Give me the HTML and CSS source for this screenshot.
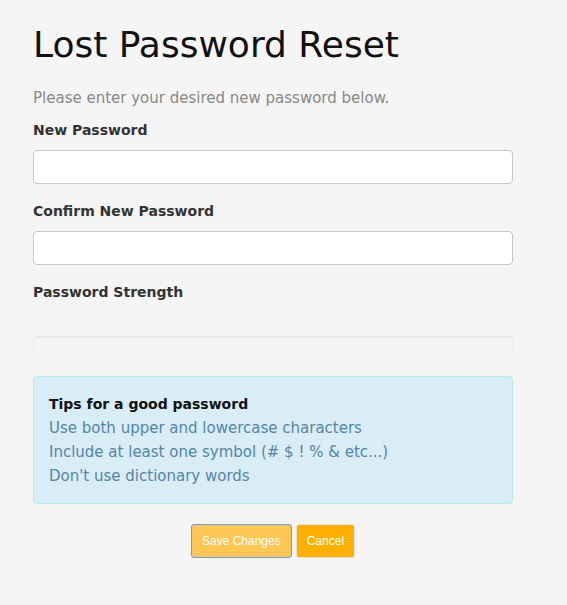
FILE: index.html
```html
<!DOCTYPE html>
<html>
<head>
<meta charset="utf-8">
<link rel="stylesheet" href="styles.css">
</head>
<body>
<div class="page">
  <h1 class="title">Lost Password Reset</h1>
  <p class="intro">Please enter your desired new password below.</p>
  <form class="form">
    <div class="group">
      <label class="label">New Password</label>
      <input class="input" type="password">
    </div>
    <div class="group">
      <label class="label">Confirm New Password</label>
      <input class="input" type="password">
    </div>
    <div class="group">
      <label class="label">Password Strength</label>
      <div class="progress"></div>
    </div>
    <div class="tips">
      <div class="tips-title">Tips for a good password</div>
      <div class="tip">Use both upper and lowercase characters</div>
      <div class="tip">Include at least one symbol (# $ ! % &amp; etc...)</div>
      <div class="tip">Don't use dictionary words</div>
    </div>
    <div class="actions">
      <button type="button" class="btn btn-save">Save Changes</button>
      <button type="button" class="btn btn-cancel">Cancel</button>
    </div>
  </form>
</div>
</body>
</html>
```
FILE: styles.css
```css
html, body {
  margin: 0;
  padding: 0;
  background: #f5f5f5;
}
body {
  font-family: "DejaVu Sans", sans-serif;
}
.page {
  width: 480px;
  padding: 24px 0 0 33px;
}
.title {
  margin: 0;
  font-size: 36px;
  font-weight: normal;
  color: #111;
  line-height: 42px;
  letter-spacing: 0;
}
.intro {
  margin: 22px 0 0;
  font-size: 15px;
  color: #888;
  line-height: 20px;
}
.form {
  margin-top: 12px;
}
.group {
  display: flex;
  flex-direction: column;
}
.label {
  font-size: 14px;
  font-weight: bold;
  color: #333;
  line-height: 20px;
  margin-top: 0;
  margin-bottom: 10px;
}
.input {
  height: 34px;
  box-sizing: border-box;
  border: 1px solid #c8c8c8;
  border-radius: 4px;
  background: #fff;
  margin: 0 0 17px;
}
.progress {
  height: 20px;
  margin-top: 24px;
  margin-bottom: 20px;
  border-radius: 4px;
  background: #f5f5f5;
  box-shadow: inset 0 1px 2px rgba(0,0,0,0.08);
}
.tips {
  box-sizing: border-box;
  background: #d9edf7;
  border: 1px solid #bce8f1;
  border-radius: 4px;
  padding: 15px 15px 15px;
  height: 128px;
}
.tips-title {
  font-size: 14px;
  font-weight: bold;
  color: #111;
  line-height: 24px;
}
.tip {
  font-size: 15px;
  color: #5585a8;
  line-height: 24px;
}
.actions {
  display: flex;
  justify-content: center;
  gap: 4px;
  margin-top: 20px;
}
.btn {
  font-family: "Liberation Sans", Arial, sans-serif;
  font-size: 12px;
  color: #fff;
  height: 34px;
  border-radius: 3px;
  padding: 0 10px;
}
.btn-save {
  background: #fdc655;
  border: 1px solid #6e9ed3;
}
.btn-cancel {
  background: #ffb000;
  border: 1px solid #e2e2e2;
}
```
